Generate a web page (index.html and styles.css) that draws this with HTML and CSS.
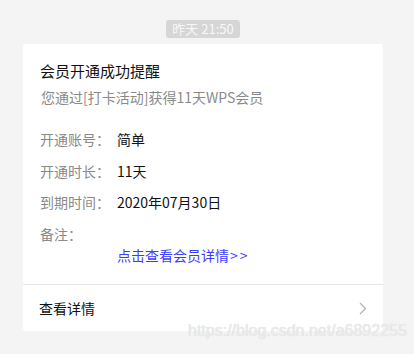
FILE: index.html
```html
<!DOCTYPE html>
<html lang="zh">
<head>
<meta charset="UTF-8" />
<title>会员开通成功提醒</title>
<link rel="stylesheet" href="styles.css">
</head>
<body>

<div class="chat">
  <div class="time-row"><span class="time">昨天 21:50</span></div>

  <div class="card">
    <div class="card-body">
      <h2 class="title">会员开通成功提醒</h2>
      <p class="sub">您通过[打卡活动]获得11天WPS会员</p>

      <div class="row"><span class="label">开通账号：</span><span class="value">简单</span></div>
      <div class="row"><span class="label">开通时长：</span><span class="value">11天</span></div>
      <div class="row"><span class="label">到期时间：</span><span class="value">2020年07月30日</span></div>
      <div class="row"><span class="label">备注：</span></div>
      <a class="link" href="#">点击查看会员详情<span class="gt">&gt;&gt;</span></a>
    </div>

    <div class="card-foot">
      <span>查看详情</span>
      <svg class="arrow" width="8" height="13" viewBox="0 0 8 13"><path d="M1 1l5.5 5.5L1 12" fill="none" stroke="#b4b4b4" stroke-width="1.3"/></svg>
    </div>
  </div>
</div>

<div class="watermark">https://blog.csdn.net/a6892255</div>

</body>
</html>
```

FILE: styles.css
```css
body {
  margin: 0;
  background: #f4f4f4;
  font-family: "Noto Sans CJK SC", "Liberation Sans", sans-serif;
  height: 354px;
  overflow: hidden;
  position: relative;
}
.chat { width: 360px; margin-left: 23px; padding-top: 15px; }
.time-row { text-align: center; height: 18px; }
.time {
  display: inline-block;
  background: #d6d6d6; color: #f8f8f8;
  font-size: 13px; line-height: 18px;
  padding: 0 6px; border-radius: 3px;
}
.card { background: #fff; border-radius: 3px; margin-top: 11px; }
.card-body { padding: 17px 17px 19px; }
.title { font-size: 15px; font-weight: normal; line-height: 20px; margin: 0; color: #111; }
.sub { font-size: 14px; line-height: 20px; margin: 6px 0 22px 1px; color: #8a8a8a; }
.row { display: flex; font-size: 14px; line-height: 20px; margin-bottom: 11.5px; }
.label { width: 77px; color: #8a8a8a; }
.value { color: #111; }
.link {
  display: block; margin: -10px 0 0 77px;
  font-size: 14px; line-height: 20px;
  color: #3c3cff; text-decoration: none;
}
.link .gt { letter-spacing: 2px; margin-left: 1px; }
.card-foot {
  display: flex; align-items: center; justify-content: space-between;
  border-top: 1px solid #e6e6e6;
  height: 46px; padding: 0 16px 0 16px;
  font-size: 14px; color: #111;
}
.watermark {
  position: absolute; left: 188px; top: 322px;
  font-family: "Liberation Sans", sans-serif;
  font-size: 16px; color: #ebebeb;
  text-shadow: 0 0 1px #d4d4d4;
}
```
